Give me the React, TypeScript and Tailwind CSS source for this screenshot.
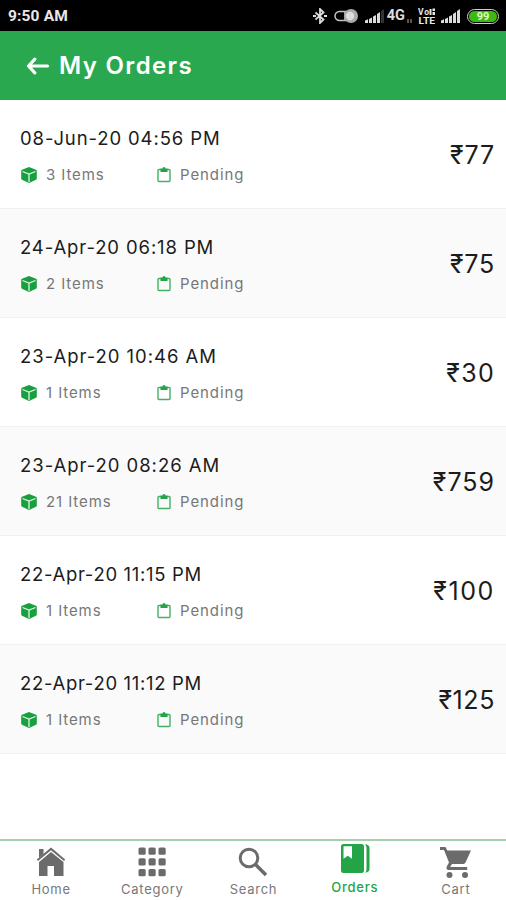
import React from "react";

interface Order {
  id: number;
  date: string;
  dateTracking: string;
  items: number;
  status: string;
  amount: string;
  amountTracking: string;
}

const orders: Order[] = [
  { id: 1, date: "08-Jun-20 04:56 PM", dateTracking: "tracking-[0.88px]", items: 3, status: "Pending", amount: "77", amountTracking: "tracking-[0.9px]" },
  { id: 2, date: "24-Apr-20 06:18 PM", dateTracking: "tracking-[0.88px]", items: 2, status: "Pending", amount: "75", amountTracking: "tracking-[0.8px]" },
  { id: 3, date: "23-Apr-20 10:46 AM", dateTracking: "tracking-[0.96px]", items: 1, status: "Pending", amount: "30", amountTracking: "tracking-[1.3px]" },
  { id: 4, date: "23-Apr-20 08:26 AM", dateTracking: "tracking-[0.96px]", items: 21, status: "Pending", amount: "759", amountTracking: "tracking-[1px]" },
  { id: 5, date: "22-Apr-20 11:15 PM", dateTracking: "tracking-[0.68px]", items: 1, status: "Pending", amount: "100", amountTracking: "tracking-[1.6px]" },
  { id: 6, date: "22-Apr-20 11:12 PM", dateTracking: "tracking-[0.68px]", items: 1, status: "Pending", amount: "125", amountTracking: "tracking-[0.6px]" },
];

const SignalIcon: React.FC<{ dim?: boolean }> = ({ dim }) => (
  <svg width="20" height="14" viewBox="0 0 20 14" fill="#dcdcdc">
    <path d="M0 14v-2.500l3-1.200V14zM4 14V10l3-1.500V14zM8 14V7.500L11 6v8zM12 14V5l3-2v11z" />
    <path d="M16 14V2l3-2v14z" fill={dim ? "#333" : "#dcdcdc"} />
  </svg>
);

const StatusBar: React.FC = () => (
  <div className="flex h-[31px] items-center bg-black pr-[7px] pl-2 font-[Roboto,sans-serif] text-white">
    <span className="mt-[2px] text-[15.5px] font-bold tracking-[0.15px] text-[#e8e8e8]">9:50 AM</span>
    <div className="mt-px ml-auto flex items-center">
      <svg className="mr-[7px]" width="14" height="16" viewBox="0 0 14 16" fill="none" stroke="#dcdcdc" strokeWidth="1.8">
        <path d="M2.500 4.500l8 7L7 15V1l3.500 3.500-8 7" />
        <path d="M0 8h3M11 8h3" />
      </svg>
      <svg className="mr-[6px]" width="25" height="16" viewBox="0 0 25 16">
        <rect x="1" y="3.500" width="18" height="9" rx="4.500" fill="none" stroke="#c4c4c4" strokeWidth="1.500" />
        <path d="M10 4h8v8h-8z" fill="#9a9a9a" />
        <circle cx="17" cy="8" r="7" fill="#aaa" />
        <circle cx="16" cy="8" r="4.200" fill="#ddd" />
      </svg>
      <SignalIcon dim />
      <span className="ml-[2px] text-[14.5px] font-bold text-[#dcdcdc]">4G</span>
      <svg className="mt-2 mr-[5px] ml-[2px]" width="6" height="6" fill="#555">
        <path d="M0 2h2v4H0zM3 2h2v4H3z" />
      </svg>
      <svg className="mr-[5px]" width="18" height="18" viewBox="0 0 18 18" fill="#e8e8e8" fontFamily="Roboto, sans-serif" fontWeight="700">
        <text x="0" y="8" fontSize="8.500" textLength="11">Vo</text>
        <path d="M11.500 2h2v6h-2zM14.500 1.500H17v2.500h-2.500zM14.500 5H17v3h-2.500z" />
        <text x="0.5" y="17" fontSize="8.500" textLength="16.500" lengthAdjust="spacingAndGlyphs">LTE</text>
      </svg>
      <SignalIcon />
      <span className="ml-[6px] flex h-[15px] w-[32px] items-center justify-center rounded-full border-[1.5px] border-[#d0d0d0] bg-black p-px">
        <span className="flex h-full w-full items-center justify-center rounded-full bg-[#3dba12] text-[11px] leading-none font-bold text-[#dcffc8]">
          99
        </span>
      </span>
    </div>
  </div>
);

const Header: React.FC = () => (
  <header className="flex h-[69px] items-center bg-[#2aa850] pl-[26px] text-white">
    <svg width="24" height="18" viewBox="0 0 24 18" fill="none" stroke="currentColor" strokeWidth="3.200" strokeLinecap="round" strokeLinejoin="round">
      <path d="M8.800 2.200L2.500 9l6.300 6.800M3 9H21.500" />
    </svg>
    <h1 className="mt-px ml-[9px] text-2xl font-semibold tracking-[1.35px]">My Orders</h1>
  </header>
);

const BoxIcon: React.FC = () => (
  <svg width="16" height="16" viewBox="0 0 16 16">
    <path d="M8 0l7 2.800c.6.200.8.600.8 1.200v7.500c0 .6-.3 1-.8 1.300L8 16l-7-3.200c-.5-.3-.8-.7-.8-1.300V4c0-.6.2-1 .8-1.200z" fill="#18a03e" />
    <path d="M1.500 4.500L8 7l6.500-2.500M8 7v8" fill="none" stroke="#dff3e5" strokeWidth="1.300" />
  </svg>
);

const ClipboardIcon: React.FC = () => (
  <svg width="14" height="16" viewBox="0 0 14 16">
    <path d="M4 2.500H2a1 1 0 00-1 1V13.500a1 1 0 001 1h10a1 1 0 001-1V3.500a1 1 0 00-1-1h-2" fill="none" stroke="#43b062" strokeWidth="1.400" />
    <path d="M3.500 1.500h2a1.500 1.500 0 013 0h2V5h-7z" fill="#22a447" />
  </svg>
);

const OrderRow: React.FC<{ order: Order }> = ({ order }) => (
  <li className="flex h-[109px] items-center justify-between border-b border-[#f1f1f1] bg-white pr-[11px] pl-[21px] even:bg-[#fafafa]">
    <div className="mt-[5px]">
      <p className={`-ml-px text-[18.500px] leading-6 text-[#1c1c1c] ${order.dateTracking}`}>{order.date}</p>
      <div className="mt-[13px] flex h-6 items-center text-[15px] tracking-[0.9px] text-[#777]">
        <div className="flex w-[136px] items-center gap-[9px]">
          <BoxIcon />
          <span>{order.items} Items</span>
        </div>
        <div className="flex items-center gap-[9px]">
          <ClipboardIcon />
          <span>{order.status}</span>
        </div>
      </div>
    </div>
    <span className={`mt-1 text-[25px] text-[#1c1c1c] ${order.amountTracking}`}>₹{order.amount}</span>
  </li>
);

const HomeIcon: React.FC = () => (
  <svg width="30" height="30" viewBox="0 0 30 30" fill="#6b6b6b">
    <path d="M3 2h4.500v5L3 11z" />
    <path d="M15 .5L.8 12.500 2 14 15 3.300 28 14l1.200-1.500z" />
    <path d="M15 5L3 15v14h8.500V19h6.500v10H27.500V15z" />
  </svg>
);

const CategoryIcon: React.FC = () => (
  <svg width="28" height="30" viewBox="0 0 28 30" fill="#6b6b6b">
    {[0.5, 11.2, 22].map((y) =>
      [0.5, 10.5, 20.5].map((x) => <rect key={`${x}-${y}`} x={x} y={y} width="7.200" height="7.200" rx="1.500" />)
    )}
  </svg>
);

const SearchIcon: React.FC = () => (
  <svg width="30" height="30" viewBox="0 0 30 30" fill="none" stroke="#6b6b6b" strokeWidth="3">
    <circle cx="11" cy="11" r="8.800" />
    <path d="M17 17l11 11" strokeWidth="3.600" />
  </svg>
);

const OrdersIcon: React.FC = () => (
  <svg width="30" height="30" viewBox="0 0 30 30">
    <path d="M3.500 0H21.500a2.500 2.500 0 012.500 2.500v24A2.500 2.500 0 0121.500 29H3.500A2.500 2.500 0 011 26.500v-24A2.500 2.500 0 013.500 0z" fill="#22a447" />
    <path d="M3.500 2.200H12v12.500l-4.250-3-4.250 3z" fill="#fff" />
    <path d="M25 .3c3 .2 4.500 1.500 4.500 4v20.500c0 2.500-1.500 3.700-4.500 4 1-1 1.500-2 1.500-3.500V4c0-1.500-.5-2.700-1.500-3.700z" fill="#22a447" />
  </svg>
);

const CartIcon: React.FC = () => (
  <svg width="32" height="32" viewBox="0 0 32 32" fill="#6b6b6b">
    <path d="M0 0h5.500l1.800 3.500H31L25.500 15.500c-.6 1.100-1.500 1.500-2.700 1.500H12l-1.800 3h17v3H9c-2.500 0-3-2-2-4l2-3.500L4 3H0z" />
    <circle cx="9.500" cy="28" r="3" />
    <circle cx="25" cy="28" r="3" />
  </svg>
);

const tabs = [
  { label: "Home", icon: <HomeIcon /> },
  { label: "Category", icon: <CategoryIcon /> },
  { label: "Search", icon: <SearchIcon /> },
  { label: "Orders", icon: <OrdersIcon />, active: true },
  { label: "Cart", icon: <CartIcon /> },
];

const BottomNav: React.FC = () => (
  <nav className="grid h-[61px] grid-cols-5 border-t-2 border-[#a5cfad] bg-white">
    {tabs.map((tab) => (
      <a
        key={tab.label}
        className={`flex flex-col items-center pl-px text-[13px] tracking-[0.75px] ${
          tab.active ? "pt-[3px] font-medium text-[#22a447]" : "pt-[6px] text-[#777]"
        }`}
      >
        <span className="flex h-8 items-start">{tab.icon}</span>
        <span className={`leading-4 ${tab.active ? "mt-[3px]" : "mt-[2px]"}`}>{tab.label}</span>
      </a>
    ))}
  </nav>
);

const App: React.FC = () => (
  <div className="flex h-[900px] w-[506px] flex-col overflow-hidden bg-white font-[Inter,sans-serif]">
    <StatusBar />
    <Header />
    <ul className="flex-1">
      {orders.map((order) => (
        <OrderRow key={order.id} order={order} />
      ))}
    </ul>
    <BottomNav />
  </div>
);

export default App;
